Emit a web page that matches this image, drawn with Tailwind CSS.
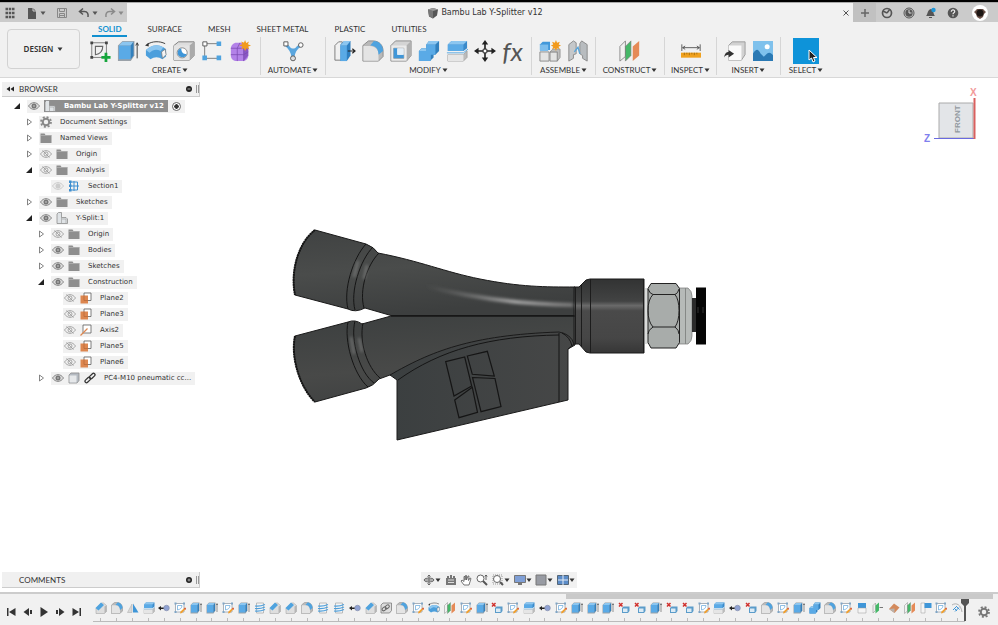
<!DOCTYPE html>
<html lang="en">
<head>
    <meta charset="UTF-8">
    <meta name="viewport" content="width=device-width, initial-scale=1.0">
    <title>Bambu Lab Y-Splitter v12</title>
    <script src="https://cdn.jsdelivr.net/npm/@tailwindcss/browser@4"></script>
</head>
<body class="min-h-screen flex flex-col bg-white text-[#333] text-[8px] leading-[10px] font-['Noto_Sans',sans-serif] border-t-2 border-black">

    <!-- Icon set -->
    <svg class="hidden" xmlns="http://www.w3.org/2000/svg">
        <symbol id="caret" viewBox="0 0 6 6"><path d="M.5 1.500h5L3 5z" fill="currentColor"/></symbol>
        <symbol id="sketch" viewBox="0 0 24 24">
            <path d="M3 3h16v16H3z" fill="none" stroke="#777" stroke-width="1"/>
            <path d="M7 7h8c0 5-3 8-8 9z" fill="none" stroke="#666" stroke-width="1.2"/>
            <g fill="#444"><path d="M1.500 1.500h3v3h-3zM17.500 1.500h3v3h-3zM1.500 17.500h3v3h-3z"/></g>
            <path d="M17 14h3v3.500h3.500v3H20V24h-3v-3.500h-3.500v-3H17z" fill="#16a53c"/>
        </symbol>
        <symbol id="sketchEdit" viewBox="0 0 24 24">
            <path d="M3 3h17v17H3z" fill="#fff" stroke="#8f9aa5" stroke-width="1.500"/>
            <path d="M7 7h9c0 5-4 8-9 9z" fill="none" stroke="#6cabdc" stroke-width="1.500"/>
            <path d="M1 1h4v4H1zM18 1h4v4h-4zM1 18h4v4H1z" fill="#7fa5c6"/>
            <path d="M22 11l2 2-8 9-4 1 1-4z" fill="#f0a030"/><path d="M20 13l3 3 1-3-2-2z" fill="#d4574a"/>
        </symbol>
        <symbol id="extrude" viewBox="0 0 24 24">
            <path d="M1 6l5-5h13v16l-4 6H1z" fill="#9aa1a8"/>
            <path d="M2 6l4-4h12l-3 4z" fill="#8cc6f0"/><path d="M2 6h13v15H2z" fill="#5aaae6"/><path d="M15 6l3-4v15l-3 4z" fill="#3280bd"/>
            <path d="M22 20V4M20.500 6L22 3l1.500 3" fill="none" stroke="#333" stroke-width="1"/>
        </symbol>
        <symbol id="revolve" viewBox="0 0 24 24">
            <path d="M2 5c6-4 14-4 20-1" fill="none" stroke="#333" stroke-width="1"/><path d="M0 6l4-3v4z" fill="#333"/>
            <path d="M1 11l4-3c5-3 10-3 15 0l3 2v8l-4 3c-4-3-9-3-13 0l-5-4z" fill="#4c9fdc"/>
            <path d="M1 11l4-3c5-3 10-3 15 0l-3 4c-4-2-8-2-12 2z" fill="#8cc6f0"/>
            <path d="M18 13l4-3 1 6-4 4z" fill="#f4f4f4" stroke="#777" stroke-width=".8"/>
        </symbol>
        <symbol id="hole" viewBox="0 0 24 24">
            <path d="M1 6l5-4h17v15l-5 5H1z" fill="#ddd" stroke="#777" stroke-width="1"/><path d="M18 6l5-4v15l-5 5z" fill="#aaa"/>
            <path d="M1 6h17v16H1z" fill="#e4e4e4"/>
            <circle cx="10" cy="14" r="5.500" fill="#fff" stroke="#888"/><path d="M9 9a5 5 0 1 0 6 6c-4 1-6-2-6-6z" fill="#3f96d8"/>
        </symbol>
        <symbol id="pattern" viewBox="0 0 24 24">
            <path d="M5 4h14M4 5v14M5 20h14" stroke="#777" fill="none" stroke-width="1"/>
            <path d="M2 2h4.500v4.500H2z" fill="#fff" stroke="#555"/><path d="M17 1.500h5v5h-5zM17 17h5v5h-5zM1.500 17h5v5h-5z" fill="#4fa3df"/>
        </symbol>
        <symbol id="form" viewBox="0 0 24 24">
            <path d="M2 9c0-3 3-6 6-6h7c4 0 6 3 6 6v8c0 3-2 6-6 6H8c-4 0-6-3-6-6z" fill="#b382e8"/>
            <path d="M16 9l5-2v10l-5 6z" fill="#8a57c4"/>
            <path d="M2 9h14l5-3M2 16h14l5-3M9 9v14M16 9v14M9 9l3-6" stroke="#7a4ab0" fill="none" stroke-width=".8"/>
            <path d="M17.500 0l1.300 3.200 3-1.500-1.200 3L24 6l-3.200 1.300 1.400 3-3-1.200L17.500 12l-1.200-3-3 1.200 1.400-3L11 6l3.500-1.300-1.200-3 3 1.400z" fill="#f29a1c"/>
        </symbol>
        <symbol id="automate" viewBox="0 0 24 24">
            <path d="M4 5c4 3 7 6 8 14 1-8 4-11 8-13" fill="none" stroke="#5aa6de" stroke-width="3"/><path d="M7 7c4 3 7 3 11 1l-6 8z" fill="#5aa6de"/>
            <path d="M2 2h4.500v4.500H2z" fill="#fff" stroke="#555"/><circle cx="20.500" cy="5.500" r="2.500" fill="#fff" stroke="#555"/><circle cx="12" cy="20" r="2.700" fill="#ddd" stroke="#555"/>
        </symbol>
        <symbol id="pressPull" viewBox="0 0 24 24">
            <path d="M1 6l4-4h4v20H1z" fill="#f1f1f1" stroke="#777"/>
            <path d="M7 5l4-4h7v16l-4 6H7z" fill="#2f7fc0"/><path d="M7 6h7v17H7z" fill="#5aaae6"/><path d="M7 6l4-5h7l-4 5z" fill="#8cc6f0"/>
            <path d="M15 12h7M20 9.500l3 2.500-3 2.500" fill="none" stroke="#222" stroke-width="1.200"/>
        </symbol>
        <symbol id="fillet" viewBox="0 0 24 24">
            <path d="M1 6l6-5h5c7 0 11 5 11 11v6l-5 5H1z" fill="#b9b9b9" stroke="#888"/>
            <path d="M1.500 6.500h7c6 0 9.500 4 9.500 9v7H1.500z" fill="#e4e4e4"/>
            <path d="M9 6l4-5c6 0 10 5 10 11l-5 4c0-6-3-10-9-10z" fill="#4fa3df"/>
        </symbol>
        <symbol id="chamfer" viewBox="0 0 24 24">
            <path d="M2 13L13 2h4l6 5v12l-4 4H2z" fill="#dedede" stroke="#999"/><path d="M19 9l4-2v12l-4 4z" fill="#b5b5b5"/>
            <path d="M1 12L12 1l6 5L7 17z" fill="#4fa3df"/>
        </symbol>
        <symbol id="shell" viewBox="0 0 24 24">
            <path d="M1 6l5-5h17v16l-5 6H1z" fill="#d4d4d4" stroke="#888"/><path d="M18 6l5-5v16l-5 6z" fill="#b0b0b0"/>
            <path d="M1.500 6h16.500v16.500H1.500z" fill="#ebebeb"/><path d="M4 9h11v11H4z" fill="#fff" stroke="#888" stroke-width=".8"/>
            <path d="M4 9h4v7h7v4H4z" fill="#3f96d8"/><path d="M8 9h7v7H8z" fill="#e3eef7"/>
        </symbol>
        <symbol id="combine" viewBox="0 0 24 24">
            <path d="M9 5l3-4h11v11l-4 4h-2v3l-4 4H1V12l3-3h5z" fill="#3280bd"/>
            <path d="M9 5h10v11h-5v7H1V12h8z" fill="#5aaae6"/><path d="M9 5l3-4h11l-4 4zM1 12l3-3h5v3z" fill="#8cc6f0"/>
        </symbol>
        <symbol id="split" viewBox="0 0 24 24">
            <path d="M2 5l4-4h17v8l-4 3H2z" fill="#3a8aca"/><path d="M2 5h17v7H2z" fill="#5aaae6"/><path d="M2 5l4-4h17l-4 4z" fill="#8cc6f0"/>
            <path d="M1 14h18l5-4" fill="none" stroke="#4fa3df" stroke-width="1"/>
            <path d="M2 16h17l4-4v7l-4 4H2z" fill="#bcbcbc" stroke="#999" stroke-width=".8"/><path d="M2 16h17v7H2z" fill="#e6e6e6"/>
        </symbol>
        <symbol id="moveCross" viewBox="0 0 24 24">
            <path d="M12 3v18M3 12h18" stroke="#222" stroke-width="1.800"/>
            <path d="M12 0l3.500 5h-7zM12 24l3.500-5h-7zM0 12l5-3.500v7zM24 12l-5-3.500v7z" fill="#222"/><path d="M10 10h4v4h-4z" fill="#fff" stroke="#222"/>
        </symbol>
        <symbol id="component" viewBox="0 0 24 24">
            <path d="M1 5l3-3h8v9H1z" fill="#4298da"/><path d="M1 5h9v7H1z" fill="#7dbdec"/>
            <path d="M1 13h10v10H1zM12 13h8v10h-8z" fill="#e4e4e4" stroke="#888"/><path d="M12 13l3-3h8v9l-3 4V13z" fill="#bdbdbd" stroke="#888" stroke-width=".8"/>
            <path d="M18.500 0l1.200 3 3-1.200-1.200 3L24 6l-2.700 1.300 1.300 2.900-3-1.200-1.100 3-1.200-3-3 1.200 1.200-2.900L13 6l2.500-1.200-1.200-3 3 1.200z" fill="#f29a1c"/>
        </symbol>
        <symbol id="joint" viewBox="0 0 24 24">
            <path d="M2 5l5-4 3 2v12l-3 1v4l-5 3z" fill="#c5c8ca" stroke="#888"/><path d="M22 5l-6-4-2 3v11l3 2v3l5 3z" fill="#b8bcbf" stroke="#888"/>
            <path d="M8 13l4-5 2 7" fill="none" stroke="#59a6da" stroke-width="1.500"/>
        </symbol>
        <symbol id="planes" viewBox="0 0 24 24">
            <path d="M1 7l6-6v17l-6 5z" fill="#f1f1f1" stroke="#888"/><path d="M7 7l6-6v16l-6 6z" fill="#45b868" stroke="#777" stroke-width=".7"/>
            <path d="M15 7l7-6v16l-7 6z" fill="#e58a57"/>
        </symbol>
        <symbol id="measure" viewBox="0 0 24 24">
            <path d="M1 4v8M23 4v8M2 8h20M5 6L2 8l3 2M19 6l3 2-3 2" fill="none" stroke="#444"/>
            <path d="M0 14h24v6H0z" fill="#f0a11d"/><path d="M4 14v3M7 14v2M10 14v3M13 14v2M16 14v3M19 14v2" stroke="#8a5a0a" stroke-width=".8"/>
        </symbol>
        <symbol id="insert" viewBox="0 0 24 24">
            <path d="M5 6l4-4h14v14l-4 6H5z" fill="#d2d2d2" stroke="#999"/><path d="M5 6h14v16H5z" fill="#fafafa"/>
            <path d="M0 19c1-5 3-6 5-6v-2l6 4-6 4v-3c-2 0-4 1-5 3z" fill="#333"/>
        </symbol>
        <symbol id="image" viewBox="0 0 24 24">
            <path d="M0 0h24v24H0z" fill="#7fc1ec"/><circle cx="17" cy="7" r="3" fill="#fff"/>
            <path d="M0 15c4-6 6-6 9 0l4 4 4-4c3-2 5 0 7 2v7H0z" fill="#2a79b4"/>
        </symbol>
        <symbol id="mirror" viewBox="0 0 24 24"><path d="M10 4v17H1z" fill="#d8d8d8" stroke="#aaa"/><path d="M12 3v18h11z" fill="#3f96d8"/></symbol>
        <symbol id="moveDot" viewBox="0 0 24 24"><path d="M0 12l6-4v3h6v3H6v3z" fill="#222"/><circle cx="17" cy="12" r="5.500" fill="#8fa2d4" stroke="#8790ad" stroke-width="1.500"/></symbol>
        <symbol id="thread" viewBox="0 0 24 24"><path d="M5 2h14v20H5z" fill="#f5f5f5" stroke="#aaa" stroke-width="1.500"/><path d="M2 8c7 1 13 0 20-3M2 13c7 1 13 0 20-3M2 18c7 1 13 0 20-3" fill="none" stroke="#4c9fdc" stroke-width="2.200"/></symbol>
        <symbol id="linkBody" viewBox="0 0 24 24"><path d="M2 6l4-4h17v15l-4 5H2z" fill="#ddd" stroke="#777" stroke-width="1.500"/><g fill="none" stroke="#666" stroke-width="2"><rect x="4" y="11" width="9" height="6" rx="3" transform="rotate(-35 8 14)"/><rect x="10" y="7" width="9" height="6" rx="3" transform="rotate(-35 14 10)"/></g></symbol>
        <symbol id="remove" viewBox="0 0 24 24"><path d="M2 2l7 7M9 2L2 9" stroke="#d0312d" stroke-width="3"/><path d="M8 12l3-3h12v9l-3 4H8z" fill="#5b9cca"/><path d="M10 13h9v7h-9z" fill="#dcebf5"/></symbol>
        <symbol id="halfBlue" viewBox="0 0 24 24"><path d="M4 2h16v10H4z" fill="#3f96d8"/><path d="M4 12h16v10H4z" fill="#f5f5f5" stroke="#999"/></symbol>
        <symbol id="greenPlane" viewBox="0 0 24 24"><path d="M2 7l5-5v15l-5 5z" fill="#eee" stroke="#888"/><path d="M7 7l7-6v16l-7 6z" fill="#45b868"/><path d="M15 11h7" stroke="#777" stroke-width="2"/></symbol>
        <symbol id="orangePlane" viewBox="0 0 24 24"><path d="M2 14L12 3l11 8-10 11z" fill="#d48a5c"/><path d="M2 14l11 8v-9z" fill="#b9b2ac"/></symbol>
        <symbol id="flag" viewBox="0 0 24 24"><path d="M2 2h8v20H2z" fill="#f5f5f5" stroke="#999"/><path d="M9 2h14v10H9z" fill="#3f96d8"/></symbol>
        <symbol id="emboss" viewBox="0 0 24 24"><path d="M2 6c9-6 18 0 20 14" fill="none" stroke="#999" stroke-width="1.500"/><path d="M4 16l8-8M8 19l8-8M6 12l6 6M11 9l6 6" stroke="#3f96d8" stroke-width="2"/></symbol>
        <symbol id="eye" viewBox="0 0 24 24"><path d="M1 12c6-9 16-9 22 0-6 9-16 9-22 0z" fill="#ddd" stroke="#888" stroke-width="2"/><circle cx="12" cy="12" r="5" fill="#777"/><circle cx="12" cy="12" r="1.500" fill="#ddd"/></symbol>
        <symbol id="eyeOff" viewBox="0 0 24 24"><path d="M1 12c6-9 16-9 22 0-6 9-16 9-22 0zM5 5l14 14" fill="none" stroke="#999" stroke-width="1.700"/><circle cx="12" cy="12" r="4" fill="none" stroke="#999" stroke-width="1.700"/></symbol>
        <symbol id="eyeDim" viewBox="0 0 24 24"><path d="M1 12c6-9 16-9 22 0-6 9-16 9-22 0z" fill="#eee" stroke="#ccc" stroke-width="2"/><circle cx="12" cy="12" r="5" fill="#ccc"/></symbol>
        <symbol id="folder" viewBox="0 0 24 24"><path d="M1 3h8l2 3h12v16H1z" fill="#8e8e8e"/><path d="M1 7h22" stroke="#c9c9c9"/></symbol>
        <symbol id="gear" viewBox="0 0 24 24"><circle cx="12" cy="12" r="6.500" fill="none" stroke="currentColor" stroke-width="4"/><circle cx="12" cy="12" r="10" fill="none" stroke="currentColor" stroke-width="3.500" stroke-dasharray="4 3.850"/></symbol>
        <symbol id="part" viewBox="0 0 24 24"><path d="M2 4l3-3h6v10h9l3 3v9H2z" fill="#dfe3e6" stroke="#888" stroke-width="1.500"/><path d="M11 22V11M12 14h8v8" stroke="#888" fill="none"/></symbol>
        <symbol id="section" viewBox="0 0 24 24"><path d="M5 2v20M12 2v20M5 4h14v16H5M2 12h20" fill="none" stroke="#3f8fd0" stroke-width="2"/><path d="M2 1h5v5H2zM2 18h5v5H2zM2 9h5v5H2z" fill="#3f8fd0"/></symbol>
        <symbol id="plane" viewBox="0 0 24 24"><path d="M8 2h14v15H8z" fill="#fff" stroke="#555" stroke-width="1.500"/><path d="M1 7h15v16H1z" fill="#dd8750"/><path d="M8 7v10h8" fill="none" stroke="#b8693a" stroke-width="1.500"/></symbol>
        <symbol id="axis" viewBox="0 0 24 24"><path d="M6 2h16v16H6z" fill="#fff" stroke="#555" stroke-width="1.500"/><path d="M1 23l14-14" stroke="#dd8750" stroke-width="2.500"/></symbol>
        <symbol id="body" viewBox="0 0 24 24"><path d="M2 6l4-4h16v15l-4 5H2z" fill="#b5bbc2" stroke="#888" stroke-width="1.500"/><path d="M3 7h14v14H3z" fill="#e6e8ea"/></symbol>
        <symbol id="chain" viewBox="0 0 24 24"><g fill="none" stroke="#333" stroke-width="2.500"><rect x="1" y="13" width="13" height="6" rx="3" transform="rotate(-45 7.500 16)"/><rect x="10" y="5" width="13" height="6" rx="3" transform="rotate(-45 16.500 8)"/></g></symbol>
        <symbol id="undo" viewBox="0 0 24 24"><path d="M10 3L3 9l7 6M4 9h9c6 0 8 5 7 11" fill="none" stroke="currentColor" stroke-width="3"/></symbol>
    </svg>

    <header class="bg-[#f1f1f1] border-t border-b border-t-[#aaa] border-b-[#d8d8d8]">
        <!-- Title bar -->
        <div class="flex h-[19px]">
            <div class="flex items-center w-[127px] pl-1 bg-[#cbcbcb] text-[#555]">
                <button class="w-3" aria-label="Data panel"><svg class="size-3" viewBox="0 0 12 12"><path d="M1.500 2h9M1.500 6h9M1.500 10h9" stroke="currentColor" stroke-width="2.500" stroke-dasharray="2.500 .750"/></svg></button>
                <button class="flex items-center ml-2.5" aria-label="File">
                    <svg class="size-3" viewBox="0 0 12 12"><path d="M2 1h5l3 3v8H2z" fill="currentColor"/><path d="M7 1v3h3" stroke="#ccc" fill="none"/></svg>
                    <svg class="size-1.5 ml-0.5"><use href="#caret"/></svg>
                </button>
                <button class="ml-2.5 text-[#888]" aria-label="Save"><svg class="size-3" viewBox="0 0 12 12"><path d="M1.500 1.500h9v9h-9zM3.500 1.500v3h5v-3M3.500 10.500v-4h5v4M4 8.500h4" fill="none" stroke="currentColor"/></svg></button>
                <button class="flex items-center ml-2.5" aria-label="Undo">
                    <svg class="size-3"><use href="#undo"/></svg><svg class="size-1.5 ml-0.5"><use href="#caret"/></svg>
                </button>
                <button class="flex items-center ml-1.5 text-[#8a8a8a]" aria-label="Redo">
                    <svg class="size-3 -scale-x-100"><use href="#undo"/></svg><svg class="size-1.5 ml-0.5"><use href="#caret"/></svg>
                </button>
            </div>
            <div class="flex flex-1 items-center justify-center gap-0.5 pl-1">
                <svg class="size-3" viewBox="0 0 12 12"><path d="M1 2.500l5-1.500 5 1.500-1 6-4 3-4-2z" fill="#555"/><path d="M1 2.500L6 4v7.500L2 9z" fill="#777"/><path d="M1 2.500L6 1l5 1.500L6 4z" fill="#999"/></svg>
                <h1 class="font-['DejaVu_Sans',sans-serif] text-[8px] leading-3">Bambu Lab Y-Splitter v12</h1>
            </div>
            <button class="w-3.5 flex items-center justify-center" aria-label="Close tab"><svg class="size-1.5" viewBox="0 0 6 6"><path d="M.5.5l5 5M5.500.5l-5 5" stroke="#555"/></svg></button>
            <div class="flex items-center w-[145px] bg-[#cbcbcb] text-[#555]">
                <button class="w-[23px] h-full flex items-center justify-center bg-[#c1c1c1]" aria-label="New tab"><svg class="size-2.5" viewBox="0 0 10 10"><path d="M5 1v8M1 5h8" stroke="#666" stroke-width="1.500"/></svg></button>
                <button class="w-[22px] flex justify-center" aria-label="Extensions"><svg class="size-3" viewBox="0 0 12 12"><circle cx="6" cy="6" r="4.500" fill="none" stroke="currentColor" stroke-width="1.700"/><path d="M6 6l3-4M6 6L2 4" stroke="currentColor" stroke-width="1.500"/></svg></button>
                <button class="w-[22px] flex justify-center" aria-label="Job status"><svg class="size-3" viewBox="0 0 12 12"><circle cx="6" cy="6" r="5" fill="none" stroke="currentColor"/><circle cx="6" cy="6" r="3.700" fill="currentColor"/><path d="M6 3v3h2.500" stroke="#ddd" fill="none"/></svg></button>
                <button class="w-[22px] flex justify-center" aria-label="Notifications"><svg class="size-3" viewBox="0 0 12 12"><path d="M1 9c2-2 1-6 5-7 3 1 2 5 4 7zM4 10h3v1H4z" fill="currentColor"/><circle cx="8.500" cy="3" r="2.200" fill="#1e96d8"/></svg></button>
                <button class="w-[22px] flex justify-center" aria-label="Help"><svg class="size-3" viewBox="0 0 12 12"><circle cx="6" cy="6" r="5.300" fill="currentColor"/><path d="M4.300 4.700c0-2.500 3.600-2.200 3.400 0C7.600 6 6 5.700 6 7.300M6 8.300v1.200" fill="none" stroke="#eee" stroke-width="1.200"/></svg></button>
                <button class="w-8 flex justify-center" aria-label="Account"><svg class="size-4" viewBox="0 0 16 16"><circle cx="8" cy="8" r="8" fill="#fff"/><path d="M2 7l3-3h6l3 3-2 2-1 3-3 2-3-2-1-3z" fill="#6a5148"/><circle cx="8" cy="8" r="3.500" fill="#1c1614"/></svg></button>
            </div>
        </div>

        <!-- Ribbon -->
        <div class="flex">
            <button class="w-[73px] h-10 ml-[7px] mt-[7px] flex items-center justify-center gap-1 border border-[#d2d2d2] rounded-sm font-semibold">DESIGN <svg class="size-1.5"><use href="#caret"/></svg></button>
            <div class="flex-1">
                <nav class="flex gap-3.5 pl-3 h-[15px] font-['Lato',sans-serif]">
                    <a href="#" class="px-1.5 pt-0.5 border-b-2 border-[#1190d0] text-[#1190d0] font-bold">SOLID</a>
                    <a href="#" class="px-1.5 pt-0.5">SURFACE</a>
                    <a href="#" class="px-1.5 pt-0.5">MESH</a>
                    <a href="#" class="px-1.5 pt-0.5">SHEET METAL</a>
                    <a href="#" class="px-1.5 pt-0.5">PLASTIC</a>
                    <a href="#" class="px-1.5 pt-0.5">UTILITIES</a>
                </nav>
                <div id="ribbon" class="flex pb-0.5 font-['Lato',sans-serif]"></div>
            </div>
        </div>
    </header>

    <main class="relative flex flex-1 items-center justify-center">
        <!-- Model -->
        <svg class="w-[420px] h-[220px]" viewBox="289 225 420 220" role="img" aria-label="Y-Splitter model">
            <defs>
                <linearGradient id="armTop" x1="0" y1="0" x2=".25" y2="1"><stop offset="0" stop-color="#404242"/><stop offset=".5" stop-color="#4a4c4b"/><stop offset="1" stop-color="#3d3f3f"/></linearGradient>
                <linearGradient id="armLow" x1=".2" y1="0" x2=".5" y2="1"><stop offset="0" stop-color="#3d4040"/><stop offset=".6" stop-color="#484948"/><stop offset="1" stop-color="#3f4141"/></linearGradient>
                <linearGradient id="socket" x1="0" y1="0" x2="0" y2="1"><stop offset="0" stop-color="#323333"/><stop offset=".3" stop-color="#424343"/><stop offset=".36" stop-color="#6a6a6a"/><stop offset=".43" stop-color="#4a4a4a"/><stop offset=".8" stop-color="#464646"/><stop offset="1" stop-color="#363636"/></linearGradient>
                <linearGradient id="shine" x1="0" y1="0" x2="1" y2="0"><stop offset="0" stop-color="#777" stop-opacity="0"/><stop offset=".6" stop-color="#a5a5a5"/><stop offset="1" stop-color="#777"/></linearGradient>
                <linearGradient id="fin" x1="0" y1="0" x2="1" y2="0"><stop offset="0" stop-color="#3b3f40"/><stop offset="1" stop-color="#464747"/></linearGradient>
                <filter id="soft" x="-10%" y="-50%" width="120%" height="200%"><feGaussianBlur stdDeviation="1.500"/></filter>
            </defs>
            <g stroke="#1a1a1a" stroke-width="1">
                <path d="M295 336L348 322Q355 319 362 324L391 316H575V345L568 349L390 375L379 379Q373 386 366 388L315 402C302 390 290 360 295 336z" fill="url(#armLow)"/>
                <path d="M397 380L390 375C430 352 470 335 559 332Q571 334 574 344L568 349V400L397 440z" fill="url(#fin)"/>
                <path d="M315 230L366 244Q374 247 378 253C420 261 445 272 480 279C520 287 545 287 575 287V315.500H391L365 308Q355 313 348 309L295 295C290 270 299 242 315 230z" fill="url(#armTop)"/>
                <path d="M574 287h5l7-7 4-1h54v74h-54l-4-1-7-8h-5z" fill="url(#socket)"/>
            </g>
            <path d="M425 286C475 299 520 304 573 305" fill="none" stroke="url(#shine)" stroke-width="4" filter="url(#soft)"/>
            <g fill="none" stroke="#151515" stroke-width="1">
                <path d="M366 244C353 258 343 290 348 309M373 247C360 260 350 292 355 310M379 253C367 265 359 290 364 308"/>
                <path d="M348 322C344 340 353 374 368 387M355 321C350 340 360 373 374 383M363 323C359 342 367 367 380 378"/>
                <path d="M398 380C440 350 490 336 559 335M391 316H575M559 333v69M562 333q8 4 10 13"/>
                <path d="M575.500 287v57M581.500 284v63M590.500 279v74M643.500 279v74" stroke="#1c1c1c"/>
                <path d="M445.700 361.700L464.700 357L471.700 386L454 396zM467.300 356L487.300 351.300L494.300 376L472.300 374.300zM472.500 377.500L495 378.500L501 406.500L481 411.700zM454.700 400L472.300 387.300L477.500 412.300L459 417.700z" stroke-width="1.200"/>
                <path d="M315 230C299 242 290 270 295 295M295 336C290 360 302 390 315 402" stroke-width="2" stroke-dasharray="2 .500"/>
            </g>
            <g fill="none" stroke="#9b9b9b" stroke-width="2" opacity=".6" filter="url(#soft)"><path d="M358 261l-4 16M367 265l-3 14M351 337l3 17M359 338l3 14"/></g>
            <path d="M645 288h4v56h-4z" fill="#d9dbda"/>
            <path d="M679 288h9q4 3 4 8v40q0 5-4 8h-9z" fill="#b6bab8" stroke="#777" stroke-width=".7"/>
            <path d="M685.500 288v56" stroke="#858886"/>
            <path d="M651 283.500h25l3.500 5v54l-3.500 5.500h-25l-3-5.500v-54z" fill="#a8acaa" stroke="#222"/>
            <path d="M648 289q2 5 5 5.500h22q3-1 4-5.500M653 294.500q-5 5-5 16t5 16.500q-5 3-5 7M675 294.500q4 5 4 16t-4 16.500q4 3 4 7M653 327h22" fill="none" stroke="#222"/>
            <path d="M692 298h5v34h-5z" fill="#2a2a2a"/><path d="M696 287.500h10v57H696z" fill="#050505"/><path d="M698 307v6M703 307v6" stroke="#333"/>
        </svg>

        <!-- Browser panel -->
        <aside class="absolute left-0.5 top-1 w-[198px]">
            <div class="flex items-center h-[15px] pl-1 bg-[#f0f0f0] border-b border-r border-[#ccc]">
                <button class="w-3" aria-label="Collapse"><svg class="w-2 h-1.5" viewBox="0 0 8 6"><path d="M4 .5v5L.5 3zM8 .5v5L4.500 3z" fill="#222"/></svg></button>
                <h2 class="flex-1 ml-px font-['Lato',sans-serif]">BROWSER</h2>
                <svg class="size-1.5" viewBox="0 0 6 6"><circle cx="3" cy="3" r="3" fill="#222"/><path d="M1.500 3h3" stroke="#aaa"/></svg>
                <span class="w-[3px] h-2 ml-1 border-x border-[#999]"></span>
            </div>
            <ul id="tree" class="pt-px pl-[9px] font-['DejaVu_Sans',sans-serif] text-[7px]"></ul>
        </aside>

        <!-- View cube -->
        <svg class="absolute right-4 top-1 w-[60px] h-16" viewBox="922 82 60 64" font-family="Liberation Sans, sans-serif">
            <path d="M939 103h34v35h-34z" fill="#e3e5e8" stroke="#aaa"/>
            <text transform="translate(960 133) rotate(-90)" font-size="8" font-weight="bold" fill="#9299a0">FRONT</text>
            <path d="M934 138.500h40" stroke="#6a6ae0"/><path d="M974.500 98v41" stroke="#d9605f" stroke-width="2"/>
            <text x="924" y="142" font-size="10" font-weight="bold" fill="#8080ee">Z</text><text x="970" y="96" font-size="10" font-weight="bold" fill="#f29a9a">X</text>
        </svg>

        <!-- Comments panel -->
        <section class="absolute left-0.5 bottom-1 w-[198px] flex items-center h-4 pl-1 bg-[#f0f0f0] border-b border-r border-[#ccc]">
            <h2 class="flex-1 ml-[13px] font-['Lato',sans-serif]">COMMENTS</h2>
            <svg class="size-1.5" viewBox="0 0 6 6"><circle cx="3" cy="3" r="3" fill="#222"/><path d="M1.500 3h3M3 1.500v3" stroke="#aaa"/></svg>
            <span class="w-[3px] h-2 ml-1 border-x border-[#999]"></span>
        </section>

        <!-- Navigation bar -->
        <div class="absolute left-1/2 -translate-x-1/2 bottom-1 flex items-center justify-between h-4 w-[156px] px-0.5 bg-[#f1f1f1]">
            <button class="flex items-center" aria-label="Orbit"><svg class="size-3" viewBox="0 0 12 12" fill="none" stroke="#666"><path d="M6 1v10M1 6h10M4.500 2.500L6 1l1.500 1.500M4.500 9.500L6 11l1.500-1.500"/><ellipse cx="6" cy="6" rx="5" ry="2"/></svg><svg class="size-1.5"><use href="#caret"/></svg></button>
            <button aria-label="Look at"><svg class="size-3" viewBox="0 0 12 12"><path d="M1 4h10v7H1zM2 2h2v2H2zM8 2h2v2H8zM5 1h2v3H5z" fill="#777"/><path d="M3 6h6M3 8.500h6" stroke="#ddd"/></svg></button>
            <button aria-label="Pan"><svg class="size-3" viewBox="0 0 12 12"><path d="M4 11L1 7l1-1 2 1.500V2.500h1V6l.5-4.500h1V6L8 2h1l-.5 4.500L10 4l1 .5L9 11z" fill="#fff" stroke="#555" stroke-width=".8"/></svg></button>
            <button aria-label="Zoom"><svg class="size-3" viewBox="0 0 12 12"><circle cx="4.500" cy="4.500" r="3.500" fill="#fff" stroke="#666"/><path d="M7 7l4 4" stroke="#555" stroke-width="2"/><path d="M10 1v5M8.800 2.500L10 1l1.200 1.500" fill="none" stroke="#444" stroke-width=".8"/></svg></button>
            <button class="flex items-center" aria-label="Fit"><svg class="size-3" viewBox="0 0 12 12"><path d="M1 1h9v9H1z" fill="none" stroke="#999" stroke-dasharray="1 1"/><circle cx="5" cy="5" r="3.500" fill="#fff" stroke="#666"/><path d="M8 8l3 3" stroke="#555" stroke-width="2"/></svg><svg class="size-1.5"><use href="#caret"/></svg></button>
            <button class="flex items-center" aria-label="Display settings"><svg class="size-3" viewBox="0 0 12 12"><path d="M.5 1.500h11v7H.5z" fill="#7f9fd6" stroke="#777"/><path d="M4 9h4v2H4z" fill="#777"/></svg><svg class="size-1.5"><use href="#caret"/></svg></button>
            <button class="flex items-center" aria-label="Effects"><svg class="size-3" viewBox="0 0 12 12"><path d="M1 1h10v10H1z" fill="#989ba3" stroke="#777"/></svg><svg class="size-1.5"><use href="#caret"/></svg></button>
            <button class="flex items-center" aria-label="Viewports"><svg class="size-3" viewBox="0 0 12 12"><path d="M.5 1.500h11v9H.5z" fill="#5c8cc8" stroke="#567"/><path d="M6 1v10M1 6h10" stroke="#e4ecf6"/></svg><svg class="size-1.5"><use href="#caret"/></svg></button>
        </div>
    </main>

    <!-- Timeline -->
    <footer class="bg-[#f1f1f1] border-t-2 border-[#ccc]">
        <div class="flex justify-end pr-[5px]"><div class="w-[43%] h-[5px] bg-[#c9c9c9]"></div></div>
        <div class="flex items-center h-[26px]">
            <div class="flex w-[93px] pl-[3px] text-[#333]">
                <button class="w-4 mr-px flex justify-center" aria-label="First"><svg class="size-2.5" viewBox="0 0 10 10"><path d="M1 1h1.500v8H1zM9.500 1v8L3 5z" fill="currentColor"/></svg></button>
                <button class="w-4 flex justify-center" aria-label="Step back"><svg class="size-2.5" viewBox="0 0 10 10"><path d="M6 1v8L.5 5zM7 3h2v4H7z" fill="currentColor"/></svg></button>
                <button class="w-4 flex justify-center" aria-label="Play"><svg class="size-2.5" viewBox="0 0 10 10"><path d="M1.500 0v10L9 5z" fill="currentColor"/></svg></button>
                <button class="w-4 flex justify-center" aria-label="Step forward"><svg class="size-2.5" viewBox="0 0 10 10"><path d="M4 1v8l5.500-4zM1 3h2v4H1z" fill="currentColor"/></svg></button>
                <button class="w-[18px] flex justify-center" aria-label="Last"><svg class="size-2.5" viewBox="0 0 10 10"><path d="M7.500 1H9v8H7.500zM.5 1v8L7 5z" fill="currentColor"/></svg></button>
            </div>
            <ol id="timeline" class="flex flex-1"></ol>
            <svg class="w-2 h-[22px] -ml-1 mb-1" viewBox="0 0 8 22"><path d="M0 0h8v4L5 7v15H3V7L0 4z" fill="#555"/></svg>
            <button class="w-[29px] flex justify-center text-[#777]" aria-label="Timeline settings"><svg class="size-3"><use href="#gear"/></svg></button>
        </div>
    </footer>

    <script>
        // Ribbon groups: label, width class, icons
        const groups = [
            ['CREATE', 'w-[181px]', ['sketch', 'extrude', 'revolve', 'hole', 'pattern', 'form']],
            ['AUTOMATE', 'w-[65px]', ['automate']],
            ['MODIFY', 'w-[206px]', ['pressPull', 'fillet', 'shell', 'combine', 'split', 'moveCross', 'fx']],
            ['ASSEMBLE', 'w-[64px]', ['component', 'joint']],
            ['CONSTRUCT', 'w-[69px]', ['planes']],
            ['INSPECT', 'w-[52px]', ['measure']],
            ['INSERT', 'w-[64px]', ['insert', 'image']],
            ['SELECT', 'w-[50px]', ['select']],
        ];

        function ribbonIcon(name) {
            if (name === 'fx') {
                return '<span class="font-[\'Liberation_Serif\',serif] italic text-[26px] leading-6 text-[#555]">fx</span>';
            }
            if (name === 'select') {
                return `<svg class="size-[26px] shrink-0" viewBox="0 0 26 26"><path d="M0 0h26v26H0z" fill="#0e93d9"/><path d="M16 12v10l2.500-2 1.500 4 2-1-1.500-3.500H24z" fill="#222" stroke="#fff"/></svg>`;
            }
            const size = name === 'image' || name === 'measure' ? 'size-5' : 'size-[22px]';
            return `<svg class="${size}"><use href="#${name}"/></svg>`;
        }

        document.getElementById('ribbon').innerHTML = groups.map(([label, width, icons]) => `
            <div class="${width} flex flex-col items-center border-r border-[#d6d6d6] last:border-r-0">
                <div class="flex h-7">
                    ${icons.map(i => `<button class="w-7 flex items-center justify-center" aria-label="${i}">${ribbonIcon(i)}</button>`).join('')}
                </div>
                <button class="flex items-center gap-px">${label} <svg class="size-1.5"><use href="#caret"/></svg></button>
            </div>`).join('');

        // Browser tree: indent class, toggle (open / closed / none), icons, name
        const tree = [
            ['ml-0', 'open', ['eye', 'part'], 'Bambu Lab Y-Splitter v12'],
            ['ml-3', 'closed', ['gear'], 'Document Settings'],
            ['ml-3', 'closed', ['folder'], 'Named Views'],
            ['ml-3', 'closed', ['eyeOff', 'folder'], 'Origin'],
            ['ml-3', 'open', ['eyeOff', 'folder'], 'Analysis'],
            ['ml-6', '', ['eyeDim', 'section'], 'Section1'],
            ['ml-3', 'closed', ['eye', 'folder'], 'Sketches'],
            ['ml-3', 'open', ['eye', 'part'], 'Y-Split:1'],
            ['ml-6', 'closed', ['eyeOff', 'folder'], 'Origin'],
            ['ml-6', 'closed', ['eye', 'folder'], 'Bodies'],
            ['ml-6', 'closed', ['eye', 'folder'], 'Sketches'],
            ['ml-6', 'open', ['eye', 'folder'], 'Construction'],
            ['ml-9', '', ['eyeOff', 'plane'], 'Plane2'],
            ['ml-9', '', ['eyeOff', 'plane'], 'Plane3'],
            ['ml-9', '', ['eyeOff', 'axis'], 'Axis2'],
            ['ml-9', '', ['eyeOff', 'plane'], 'Plane5'],
            ['ml-9', '', ['eyeOff', 'plane'], 'Plane6'],
            ['ml-6', 'closed', ['eye', 'body', 'chain'], 'PC4-M10 pneumatic cc...'],
        ];
        const toggles = {
            open: '<path d="M7 1v6H1z" fill="#222"/>',
            closed: '<path d="M2.500 1L6.500 4l-4 3z" fill="#fff" stroke="#666" stroke-width=".8"/>',
        };

        document.getElementById('tree').innerHTML = tree.map(([indent, state, icons, name], i) => {
            const svgs = icons.map(n => `<svg class="size-3 text-[#888]"><use href="#${n}"/></svg>`);
            const toggle = state
                ? `<button class="w-3 flex justify-center" aria-label="${state}"><svg class="size-2" viewBox="0 0 8 8">${toggles[state]}</svg></button>`
                : '<span class="w-3"></span>';
            const row = i === 0
                ? `${svgs[0]}<span class="flex items-center h-3 bg-[#8e8e8e] text-white font-bold pr-1">${svgs[1]}<span class="ml-2">${name}</span></span>
                   <input type="radio" checked aria-label="Activate ${name}" class="appearance-none size-[9px] rounded-full border border-[#666] bg-[radial-gradient(#333_40%,white_50%)]">`
                : `${svgs.join('')}<span class="ml-1 whitespace-nowrap">${name}</span>`;
            return `<li class="flex items-center gap-1 h-4 ${indent}">${toggle}
                <div class="flex items-center gap-1 h-[13px] pl-px pr-1 bg-[#f1f1f1]">${row}</div></li>`;
        }).join('');

        // Timeline features in the order they were made
        const features = `chamfer fillet mirror split moveDot sketchEdit extrude extrude sketchEdit extrude thread chamfer
            chamfer fillet thread thread moveDot chamfer linkBody fillet sketchEdit revolve planes sketchEdit extrude remove
            sketchEdit split moveDot sketchEdit extrude extrude extrude remove remove extrude remove remove sketchEdit split
            moveDot remove fillet sketchEdit extrude combine fillet sketchEdit halfBlue greenPlane orangePlane planes flag
            sketchEdit emboss`.split(/\s+/);

        document.getElementById('timeline').innerHTML = features.map(f => `
            <li class="flex-1 flex flex-col items-center border-b border-[#bbb]">
                <button aria-label="${f}"><svg class="size-3"><use href="#${f}"/></svg></button>
                <span class="w-px h-[3px] mt-1 bg-[#bbb]"></span>
            </li>`).join('');
    </script>
</body>
</html>
